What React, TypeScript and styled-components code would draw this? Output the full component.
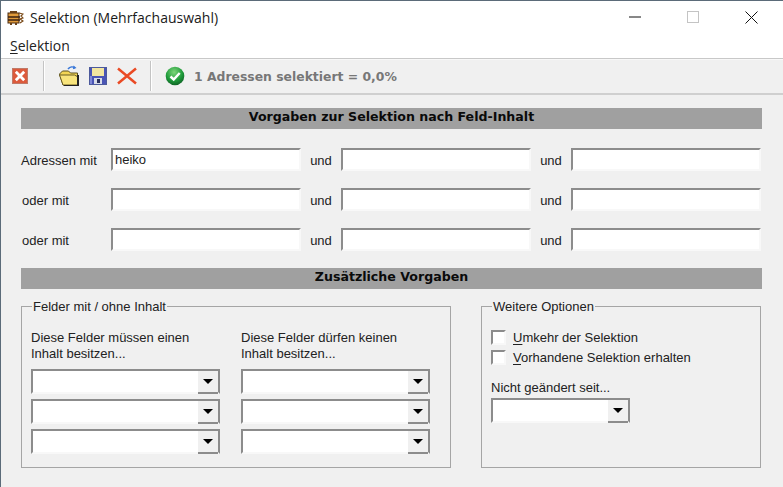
import React from "react";
import styled, { createGlobalStyle } from "styled-components";

const Global = createGlobalStyle`
  html, body { margin: 0; padding: 0; background: #f0f0f0; }
  body { font-family: "Liberation Sans", Arial, sans-serif; overflow: hidden; }
  * { box-sizing: border-box; }
`;
const Win = styled.div`
  width: 783px; height: 487px; display: flex; flex-direction: column;
  border-top: 1px solid #5b6b79; border-left: 1px solid #5b6b79; background: #f0f0f0; overflow: hidden;
`;
const TitleBar = styled.div`
  height: 33px; background: #fff; display: flex; align-items: center; padding: 0 0 0 5px; flex: none;
`;
const TitleText = styled.span`
  font: 14px "Open Sans", "Noto Sans", sans-serif; color: #1a1a1a; margin-left: 6px; flex: 1; white-space: nowrap;
`;
const WinButtons = styled.div`
  display: flex; align-items: center; margin-right: 3px; margin-top: -1px;
`;
const WinButton = styled.div`
  width: 58px; height: 30px; display: flex; align-items: center; justify-content: center;
`;
const MenuBar = styled.div`
  height: 25px; background: #fff; display: flex; align-items: center; padding: 0 0 2px 9px; flex: none;
  border-bottom: 1px solid #c8c8c8;
  font: 14px "Open Sans", "Noto Sans", sans-serif; color: #222;
`;
const Key = styled.span`text-decoration: underline; text-underline-offset: 2px;`;
const Toolbar = styled.div`
  height: 36px; flex: none; display: flex; align-items: center; padding: 0 0 1px 11px;
  border-top: 1px solid #f8f8f8; border-bottom: 2px solid #cfcfcf; background: #f0f0f0;
`;
const ToolSep = styled.div<{ $r: number; $l: number }>`
  width: 2px; height: 30px; background: #c4c4c4; border-right: 1px solid #fff; margin: 0 ${(p) => p.$r}px 0 ${(p) => p.$l}px;
`;
const ToolGap = styled.span<{ $w: number }>`width: ${(p) => p.$w}px; flex: none;`;
const ToolIcon = styled.svg`display: block; flex: none;`;
const Status = styled.span`
  font: bold 12.4px "DejaVu Sans", sans-serif; color: #777; margin-left: 9px; white-space: nowrap;
`;
const Body = styled.div`
  flex: 1; padding: 13px 20px 0 20px; display: flex; flex-direction: column;
`;
const SectionBar = styled.div`
  width: 741px; height: 21px; background: #a0a0a0; display: flex; align-items: center; justify-content: center;
  font: bold 12.6px "DejaVu Sans", sans-serif; color: #0a0a0a; flex: none; padding-bottom: 4px;
`;
const FieldGrid = styled.div`
  display: grid; grid-template-columns: 90px 190px 40px 190px 40px 190px; grid-auto-rows: 23px; row-gap: 17px;
  margin: 19px 0 17px 0; align-items: center;
`;
const RowLabel = styled.span<{ $ind?: boolean }>`
  font: 13px "Liberation Sans", sans-serif; color: #222; padding: 2px 0 0 ${(p) => (p.$ind ? 1 : 0)}px; white-space: nowrap;
`;
const Und = styled.span`
  font: 13px "Liberation Sans", sans-serif; color: #222; text-align: center; padding-top: 2px;
`;
const TextBox = styled.div`
  height: 23px; background: #fff; border: 2px solid; border-color: #8c8c8c #f8f8f8 #f8f8f8 #8c8c8c;
  font: 13px "Liberation Sans", sans-serif; color: #222; padding: 2px 0 0 2px; line-height: 15px;
`;
const Groups = styled.div`
  display: flex; gap: 30px; margin-top: 9px;
`;
const Group = styled.fieldset<{ $w: number }>`
  width: ${(p) => p.$w}px; height: 170px; margin: 0; padding: 0 9px; border: 1px solid #a5a5a5; min-width: 0; position: relative;
`;
const Legend = styled.legend`
  font: 13px "Liberation Sans", sans-serif; color: #222; padding: 2px 1px 0; margin-left: 1px; line-height: 14px; white-space: nowrap;
`;
const Cols = styled.div`
  display: flex; gap: 21px; margin-top: 16px;
`;
const Col = styled.div`width: 189px; display: flex; flex-direction: column;`;
const Hint = styled.div`
  font: 13px "Liberation Sans", sans-serif; color: #222; line-height: 16px; height: 38px; white-space: nowrap;
`;
const ComboStack = styled.div`display: flex; flex-direction: column; gap: 5px; margin-top: 1px;`;
const ComboBox = styled.div<{ $w: number }>`
  width: ${(p) => p.$w}px; height: 25px; background: #fff; border: 2px solid; border-color: #8c8c8c #8c8c8c #f8f8f8 #8c8c8c;
  display: flex; justify-content: flex-end; flex: none;
`;
const ComboBtn = styled.div`
  width: 20px; background: #f0f0f0; border-bottom: 2px solid #8c8c8c;
  display: flex; align-items: center; justify-content: center; margin-bottom: -2px;
`;
const Arrow = styled.div`
  width: 0; height: 0; border-left: 5px solid transparent; border-right: 5px solid transparent; border-top: 5px solid #000;
`;
const CheckRow = styled.div`display: flex; align-items: center; height: 15px; gap: 7px; margin-bottom: 5px;`;
const CheckBox = styled.div`
  width: 15px; height: 15px; background: #fff; border: 2px solid; border-color: #8c8c8c #f8f8f8 #f8f8f8 #8c8c8c; flex: none;
`;
const CheckLabel = styled.span`
  font: 13px "Liberation Sans", sans-serif; color: #222; white-space: nowrap;
`;
const U = styled.span`text-decoration: underline; text-underline-offset: 2px;`;
const Checks = styled.div`margin-top: 16px;`;
const SinceLabel = styled.div`
  font: 13px "Liberation Sans", sans-serif; color: #222; margin: 15px 0 3px; line-height: 15px;
`;

const Combo = ({ w }: { w: number }) => (
  <ComboBox $w={w}><ComboBtn><Arrow /></ComboBtn></ComboBox>
);

const AppIcon = () => (
  <ToolIcon width="18" height="18" viewBox="0 0 18 18">
    <rect x="2" y="4" width="11" height="10" fill="#e09a3a" stroke="#4a2a10" strokeWidth="1" />
    <path d="M2 8h12M2 11h12" stroke="#3a2010" strokeWidth="1.4" />
    <path d="M13 4l4 1-2 2 2 2-3 1 3 2-3 2" fill="none" stroke="#7a4a18" strokeWidth="1.2" />
    <path d="M4 2h7v2H4zM4 14h2v2H4zM9 14h2v2H9z" fill="#6a4018" />
  </ToolIcon>
);
const ExitIcon = () => (
  <ToolIcon width="16" height="16" viewBox="0 0 16 16">
    <rect x="0.5" y="0.5" width="15" height="15" fill="#dc5a3c" stroke="#c07a68" />
    <path d="M3.8 3.8l8.4 8.4M12.2 3.8l-8.4 8.4" stroke="#fff" strokeWidth="2.8" />
  </ToolIcon>
);
const OpenIcon = () => (
  <ToolIcon width="22" height="22" viewBox="0 0 22 22">
    <path d="M10 4c2-2.5 5-2.5 7-1" fill="none" stroke="#3a78d8" strokeWidth="1.6" />
    <path d="M15.5 0.5l3 2.6-3.6 1.2z" fill="#3a78d8" />
    <path d="M1.5 9l3-3h6l2 2h7v12H5z" fill="#f2d555" stroke="#5a5020" />
    <path d="M1.5 10h15l3.5 2v8H5z" fill="#f8e47c" stroke="#6a5c20" />
    <path d="M19 10h2v11H6v-1h13z" fill="#222" />
  </ToolIcon>
);
const SaveIcon = () => (
  <ToolIcon width="18" height="18" viewBox="0 0 18 18">
    <rect x="0.5" y="0.5" width="17" height="17" fill="#4a55b5" stroke="#4c5a9c" />
    <rect x="3" y="1" width="12" height="8" fill="#f3e6a0" />
    <rect x="5" y="11" width="8" height="6" fill="#d8dce8" />
    <rect x="8" y="12" width="3" height="4" fill="#2a2f60" />
    <rect x="1" y="9" width="2" height="8" fill="#7f88d8" />
  </ToolIcon>
);
const XIcon = () => (
  <ToolIcon width="20" height="18" viewBox="0 0 20 18">
    <path d="M1 1.5l18 15M19 1.5l-18 15" stroke="#ea4a24" strokeWidth="2.5" />
  </ToolIcon>
);
const OkIcon = () => (
  <ToolIcon width="20" height="20" viewBox="0 0 20 20">
    <defs>
      <radialGradient id="ok" cx="45%" cy="30%" r="75%">
        <stop offset="0%" stopColor="#7ed67a" />
        <stop offset="60%" stopColor="#1e9a3a" />
        <stop offset="100%" stopColor="#0d5a22" />
      </radialGradient>
    </defs>
    <circle cx="10" cy="10" r="9.3" fill="url(#ok)" />
    <path d="M5.5 10.5l3.2 3 6-6.5" fill="none" stroke="#fff" strokeWidth="2.4" />
  </ToolIcon>
);

const rows = [
  { label: "Adressen mit", value: "heiko", ind: false },
  { label: "oder mit", value: "", ind: true },
  { label: "oder mit", value: "", ind: true },
];

export default function App() {
  return (
    <Win>
      <Global />
      <TitleBar>
        <AppIcon />
        <TitleText>Selektion (Mehrfachauswahl)</TitleText>
        <WinButtons>
          <WinButton>
            <svg width="12" height="2" viewBox="0 0 12 2"><path d="M0 1h12" stroke="#111" strokeWidth="1" /></svg>
          </WinButton>
          <WinButton>
            <svg width="12" height="12" viewBox="0 0 12 12"><rect x=".5" y=".5" width="11" height="11" fill="none" stroke="#c4c4c4" /></svg>
          </WinButton>
          <WinButton>
            <svg width="13" height="13" viewBox="0 0 13 13"><path d="M.5.5l12 12M12.5.5l-12 12" stroke="#111" strokeWidth="1" /></svg>
          </WinButton>
        </WinButtons>
      </TitleBar>
      <MenuBar><span><Key>S</Key>elektion</span></MenuBar>
      <Toolbar>
        <ExitIcon />
        <ToolSep $l={15} $r={13} />
        <OpenIcon />
        <ToolGap $w={9} />
        <SaveIcon />
        <ToolGap $w={10} />
        <XIcon />
        <ToolSep $l={13} $r={13} />
        <OkIcon />
        <Status>1 Adressen selektiert = 0,0%</Status>
      </Toolbar>
      <Body>
        <SectionBar>Vorgaben zur Selektion nach Feld-Inhalt</SectionBar>
        <FieldGrid>
          {rows.map((r, i) => (
            <React.Fragment key={i}>
              <RowLabel $ind={r.ind}>{r.label}</RowLabel>
              <TextBox>{r.value}</TextBox>
              <Und>und</Und>
              <TextBox />
              <Und>und</Und>
              <TextBox />
            </React.Fragment>
          ))}
        </FieldGrid>
        <SectionBar>Zusätzliche Vorgaben</SectionBar>
        <Groups>
          <Group $w={430}>
            <Legend>Felder mit / ohne Inhalt</Legend>
            <Cols>
              <Col>
                <Hint>Diese Felder müssen einen<br />Inhalt besitzen...</Hint>
                <ComboStack><Combo w={189} /><Combo w={189} /><Combo w={189} /></ComboStack>
              </Col>
              <Col>
                <Hint>Diese Felder dürfen keinen<br />Inhalt besitzen...</Hint>
                <ComboStack><Combo w={189} /><Combo w={189} /><Combo w={189} /></ComboStack>
              </Col>
            </Cols>
          </Group>
          <Group $w={280}>
            <Legend>Weitere Optionen</Legend>
            <Checks>
              <CheckRow><CheckBox /><CheckLabel><U>U</U>mkehr der Selektion</CheckLabel></CheckRow>
              <CheckRow><CheckBox /><CheckLabel><U>V</U>orhandene Selektion erhalten</CheckLabel></CheckRow>
            </Checks>
            <SinceLabel>Nicht geändert seit...</SinceLabel>
            <Combo w={139} />
          </Group>
        </Groups>
      </Body>
    </Win>
  );
}
